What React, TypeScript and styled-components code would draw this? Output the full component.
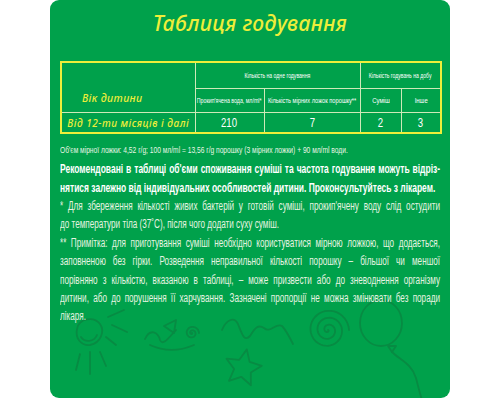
import React from 'react'
import styled, { createGlobalStyle } from 'styled-components'

const YELLOW = '#eeee3a'
const GRID = '#cfe9b8'
const GREEN = '#00a14b'
const DOODLE = '#078b43'
const NARROW = `"Liberation Sans", Arial, sans-serif`
const SCRIPT = `"Noto Sans", "DejaVu Sans", sans-serif`
const TEXT_W = 380

const GlobalStyle = createGlobalStyle`
  html, body {
    margin: 0;
    padding: 0;
    background: #fff;
    overflow: hidden;
  }
`

const Panel = styled.section`
  position: relative;
  width: 400px;
  height: 398px;
  margin-left: 50px;
  box-sizing: border-box;
  padding: 0 10px;
  background: ${GREEN};
  border-radius: 9px;
  overflow: hidden;
  font-family: ${NARROW};
  color: #fff;
`

const Title = styled.h1`
  position: relative;
  z-index: 1;
  margin: 0;
  height: 61px;
  padding-top: 8px;
  box-sizing: border-box;
  text-align: center;
  font: italic 500 21px/30px ${SCRIPT};
  letter-spacing: 0.4px;
  color: ${YELLOW};
`

const Table = styled.table`
  position: relative;
  z-index: 1;
  width: ${TEXT_W}px;
  border-collapse: collapse;
  table-layout: fixed;
  border: 2px solid ${YELLOW};
`

const Head = styled.th<{ $h: number }>`
  height: ${p => p.$h}px;
  padding: 0;
  border: 1px solid ${GRID};
  font-weight: 400;
  font-size: 7.5px;
  line-height: 9px;
  color: #fff;
  vertical-align: middle;
`

const AgeHead = styled.th`
  padding: 0 32px 8px 0;
  border: 1px solid ${GRID};
  vertical-align: bottom;
  text-align: center;
  font: italic 500 10.5px/12px ${SCRIPT};
  letter-spacing: 0.4px;
  color: ${YELLOW};
`

const Cell = styled.td`
  height: 19px;
  padding: 0;
  border: 1px solid ${GRID};
  text-align: center;
  vertical-align: middle;
  font-size: 12px;
  line-height: 14px;
  color: #fff;
`

const AgeCell = styled(Cell)`
  font: italic 500 10px/12px ${SCRIPT};
  letter-spacing: 0.5px;
  color: ${YELLOW};
`

const CellBox = styled.div`
  display: flex;
  justify-content: center;
  align-items: center;
  white-space: nowrap;
`

const Fit = styled.span<{ $k: number }>`
  display: inline-block;
  white-space: nowrap;
  transform: scaleX(${p => p.$k});
`

const Squeeze = styled.div<{ $k: number }>`
  position: relative;
  z-index: 1;
  width: ${p => TEXT_W / p.$k}px;
  transform: scaleX(${p => p.$k});
  transform-origin: left top;
`

const Note = styled(Squeeze)`
  margin-top: 10px;
  font-size: 9px;
  line-height: 12px;
  color: #e9f6e4;
`

const Warning = styled(Squeeze)`
  margin-top: 3px;
  font-size: 13px;
  font-weight: 700;
  line-height: 19px;
`

const Footnote = styled(Squeeze)`
  font-size: 12px;
  line-height: 18.4px;
  color: #e6f4e1;
`

const Line = styled.span<{ $last?: boolean }>`
  display: block;
  white-space: nowrap;
  text-align: justify;
  text-align-last: ${p => (p.$last ? 'left' : 'justify')};
`

const Doodles = styled.svg`
  position: absolute;
  left: 0;
  top: 290px;
  z-index: 0;
`

function spiral(cx: number, cy: number, r: number, turns: number) {
  const steps = Math.round(turns * 40)
  let d = ''
  for (let i = 0; i <= steps; i++) {
    const t = i / steps
    const a = t * turns * Math.PI * 2
    const rr = r * t
    const x = cx + rr * Math.cos(a)
    const y = cy + rr * Math.sin(a)
    d += `${i === 0 ? 'M' : 'L'}${x.toFixed(1)} ${y.toFixed(1)} `
  }
  return d
}

function star(cx: number, cy: number, ro: number, ri: number) {
  let d = ''
  for (let i = 0; i < 10; i++) {
    const a = -Math.PI / 2 + (i * Math.PI) / 5 + 0.2
    const r = i % 2 === 0 ? ro : ri
    d += `${i === 0 ? 'M' : 'L'}${(cx + r * Math.cos(a)).toFixed(1)} ${(cy + r * Math.sin(a)).toFixed(1)} `
  }
  return d + 'Z'
}

function Decor() {
  return (
    <Doodles width={400} height={108} viewBox="0 0 400 108" fill="none" stroke={DOODLE} strokeWidth={1.8} strokeLinecap="round" strokeLinejoin="round">
      <path d="M27 39 C29 28 44 26 50 34 C55 41 51 53 40 55 C31 56 25 48 27 39 Z" />
      <path d="M31 47 C35 53 44 52 47 45" />
      <path d="M58 27 L74 20" />
      <path d="M62 35 L77 42" />
      <path d="M56 47 L66 55" />
      <path d="M30 64 L26 80" />
      <path d="M40 62 L40 84" />
      <path d="M50 62 L56 76" />
      <path d="M95 49 C100 38 108 42 110 50 C113 57 120 46 126 40" />
      <path d="M114 36 L126 30 L124 43 Z" />
      <path d="M100 55 C115 62 130 61 144 55" />
      <path d={spiral(142, 43, 7, 2)} />
      <path d="M172 40 C176 30 184 26 188 34 C192 44 194 52 200 46 C205 38 208 34 214 38 C220 44 226 32 232 36 C236 40 240 48 243 54" />
      <path d={star(193, 78, 19, 9)} />
      <path d={spiral(278, 40, 21, 3)} />
      <ellipse cx={331} cy={33} rx={21} ry={23} />
      <path d="M338 56 L346 56 L342 62 Z" />
      <path d="M342 62 C350 70 362 74 366 88 C368 96 370 104 372 110" />
    </Doodles>
  )
}

export default function App() {
  return (
    <>
      <GlobalStyle />
      <Panel>
        <Decor />
        <Title>Таблиця годування</Title>
        <Table>
          <colgroup>
            <col style={{ width: 134 }} />
            <col style={{ width: 69 }} />
            <col style={{ width: 96 }} />
            <col style={{ width: 41 }} />
            <col style={{ width: 40 }} />
          </colgroup>
          <tbody>
            <tr>
              <AgeHead rowSpan={2}>Вік дитини</AgeHead>
              <Head $h={25} colSpan={2}>
                <CellBox><Fit $k={0.68}>Кількість на одне годування</Fit></CellBox>
              </Head>
              <Head $h={25} colSpan={2}>
                <CellBox><Fit $k={0.68}>Кількість годувань на добу</Fit></CellBox>
              </Head>
            </tr>
            <tr>
              <Head $h={23}>
                <CellBox><Fit $k={0.7}>Прокип'ячена вода, мл/ml*</Fit></CellBox>
              </Head>
              <Head $h={23}>
                <CellBox><Fit $k={0.76}>Кількість мірних ложок порошку**</Fit></CellBox>
              </Head>
              <Head $h={23}>
                <CellBox><Fit $k={0.8}>Суміш</Fit></CellBox>
              </Head>
              <Head $h={23}>
                <CellBox><Fit $k={0.8}>Інше</Fit></CellBox>
              </Head>
            </tr>
            <tr>
              <AgeCell>Від 12-ти місяців і далі</AgeCell>
              <Cell><Fit $k={0.8}>210</Fit></Cell>
              <Cell><Fit $k={0.8}>7</Fit></Cell>
              <Cell><Fit $k={0.8}>2</Fit></Cell>
              <Cell><Fit $k={0.8}>3</Fit></Cell>
            </tr>
          </tbody>
        </Table>
        <Note $k={0.74}>
          Об'єм мірної ложки: 4,52 г/g; 100 мл/ml = 13,56 г/g порошку (3 мірних ложки) + 90 мл/ml води.
        </Note>
        <Warning $k={0.65}>
          <Line>Рекомендовані в таблиці об'єми споживання суміші та частота годування можуть відріз-</Line>
          <Line $last>нятися залежно від індивідуальних особливостей дитини. Проконсультуйтесь з лікарем.</Line>
        </Warning>
        <Footnote $k={0.68}>
          <Line>* Для збереження кількості живих бактерій у готовій суміші, прокип'ячену воду слід остудити</Line>
          <Line $last>до температури тіла (37˚С), після чого додати суху суміш.</Line>
        </Footnote>
        <Footnote $k={0.68}>
          <Line>** Примітка: для приготування  суміші необхідно користуватися мірною ложкою, що додається,</Line>
          <Line>заповненою без гірки. Розведення неправильної кількості порошку – більшої чи меншої</Line>
          <Line>порівняно з кількістю, вказаною в таблиці, – може призвести або до зневоднення організму</Line>
          <Line>дитини, або до порушення її харчування. Зазначені пропорції не можна змінювати без поради</Line>
          <Line $last>лікаря.</Line>
        </Footnote>
      </Panel>
    </>
  )
}
